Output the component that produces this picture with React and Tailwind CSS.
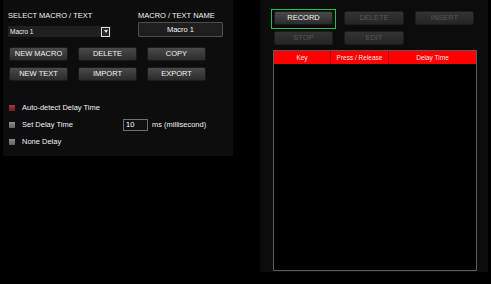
import React from "react";

function Btn({ children, disabled, className = "" }) {
  return (
    <div
      className={
        "h-[14px] w-[59px] rounded-[2px] flex items-center justify-center text-[7.5px] leading-none border " +
        (disabled
          ? "bg-gradient-to-b from-[#333333] to-[#252525] border-[#1c1c1c] text-[#555555]"
          : "bg-gradient-to-b from-[#4a4a4a] to-[#2c2c2c] border-[#1a1a1a] text-[#f0f0f0]") +
        " " +
        className
      }
    >
      {children}
    </div>
  );
}

function Check({ color, label }) {
  return (
    <div className="flex items-center h-[17px]">
      <div className={"w-[6px] h-[6px] " + color} />
      <span className="ml-[7px] text-[7.5px] text-[#f0f0f0]">{label}</span>
    </div>
  );
}

export default function App() {
  return (
    <div className="w-[491px] h-[284px] bg-black flex items-start font-['Liberation_Sans',Arial,sans-serif] overflow-hidden">
      {/* left panel */}
      <div className="ml-[3px] w-[230px] h-[156px] bg-[#0d0d0d] pl-[5px]">
        <div className="flex">
          <div className="w-[103px]">
            <div className="mt-[11px] h-[9px] leading-[9px] text-[7.5px] text-[#f0f0f0]">
              SELECT MACRO / TEXT
            </div>
            <div className="mt-[6px] h-[11px] bg-[#202020] flex items-center">
              <span className="ml-[2px] flex-1 text-[6.5px] text-[#f0f0f0]">Macro 1</span>
              <div className="w-[9px] h-[10px] border border-[#d8d8d8] bg-[#2a2a2a] flex items-center justify-center mr-[1px]">
                <div className="w-0 h-0 border-l-[2.5px] border-r-[2.5px] border-t-[3px] border-l-transparent border-r-transparent border-t-[#e8e8e8]" />
              </div>
            </div>
          </div>
          <div className="ml-[27px] w-[85px]">
            <div className="mt-[11px] h-[9px] leading-[9px] text-[7.5px] text-[#f0f0f0]">
              MACRO / TEXT NAME
            </div>
            <div className="mt-[2px] h-[15px] bg-[#1e1e1e] border border-[#4e4e4e] rounded-[1px] flex items-center justify-center text-[7.5px] text-[#f4f4f4]">
              Macro 1
            </div>
          </div>
        </div>

        <div className="mt-[10px] ml-[1px] grid grid-cols-[59px_59px_59px] gap-x-[10px] gap-y-[6px]">
          <Btn>NEW MACRO</Btn>
          <Btn>DELETE</Btn>
          <Btn>COPY</Btn>
          <Btn>NEW TEXT</Btn>
          <Btn>IMPORT</Btn>
          <Btn>EXPORT</Btn>
        </div>

        <div className="mt-[18px] ml-[1px]">
          <Check color="bg-gradient-to-b from-[#a03838] to-[#6e1f1f]" label="Auto-detect Delay Time" />
          <div className="flex items-center">
            <div className="w-[114px]">
              <Check color="bg-gradient-to-b from-[#8e8e8e] to-[#606060]" label="Set Delay Time" />
            </div>
            <div className="w-[25px] h-[12px] bg-[#101010] border border-[#6e6e6e] flex items-center text-[7.5px] text-white pl-[2px]">
              10
            </div>
            <span className="ml-[4px] text-[7.5px] text-[#f0f0f0]">ms (millisecond)</span>
          </div>
          <Check color="bg-gradient-to-b from-[#8e8e8e] to-[#606060]" label="None Delay" />
        </div>
      </div>

      {/* right panel */}
      <div className="ml-[27px] w-[228px] h-[272px] bg-[#0c0c0c] pl-[13px] pt-[11px] flex flex-col">
        <div className="ml-[1px] flex gap-x-[11px]">
          <div className="relative">
            <Btn>RECORD</Btn>
            <span className="absolute -left-[3px] -top-[2px] -right-[3px] -bottom-[4px] border border-[#22c04e]" />
          </div>
          <Btn disabled className="w-[60px]">DELETE</Btn>
          <Btn disabled>INSERT</Btn>
        </div>
        <div className="ml-[1px] mt-[6px] flex gap-x-[11px]">
          <Btn disabled>STOP</Btn>
          <Btn disabled className="w-[60px]">EDIT</Btn>
        </div>
        <div className="mt-[5px] w-[204px] h-[221px] border border-[#5c5c5c] bg-black flex flex-col">
          <div className="h-[13px] bg-[#fe0000] flex text-[6.5px] text-[#ffe4e4]">
            <div className="w-[57px] flex items-center justify-center border-r border-[#b00000]">Key</div>
            <div className="w-[58px] flex items-center justify-center border-r border-[#b00000]">Press / Release</div>
            <div className="flex-1 flex items-center justify-center">Delay Time</div>
          </div>
        </div>
      </div>
    </div>
  );
}
